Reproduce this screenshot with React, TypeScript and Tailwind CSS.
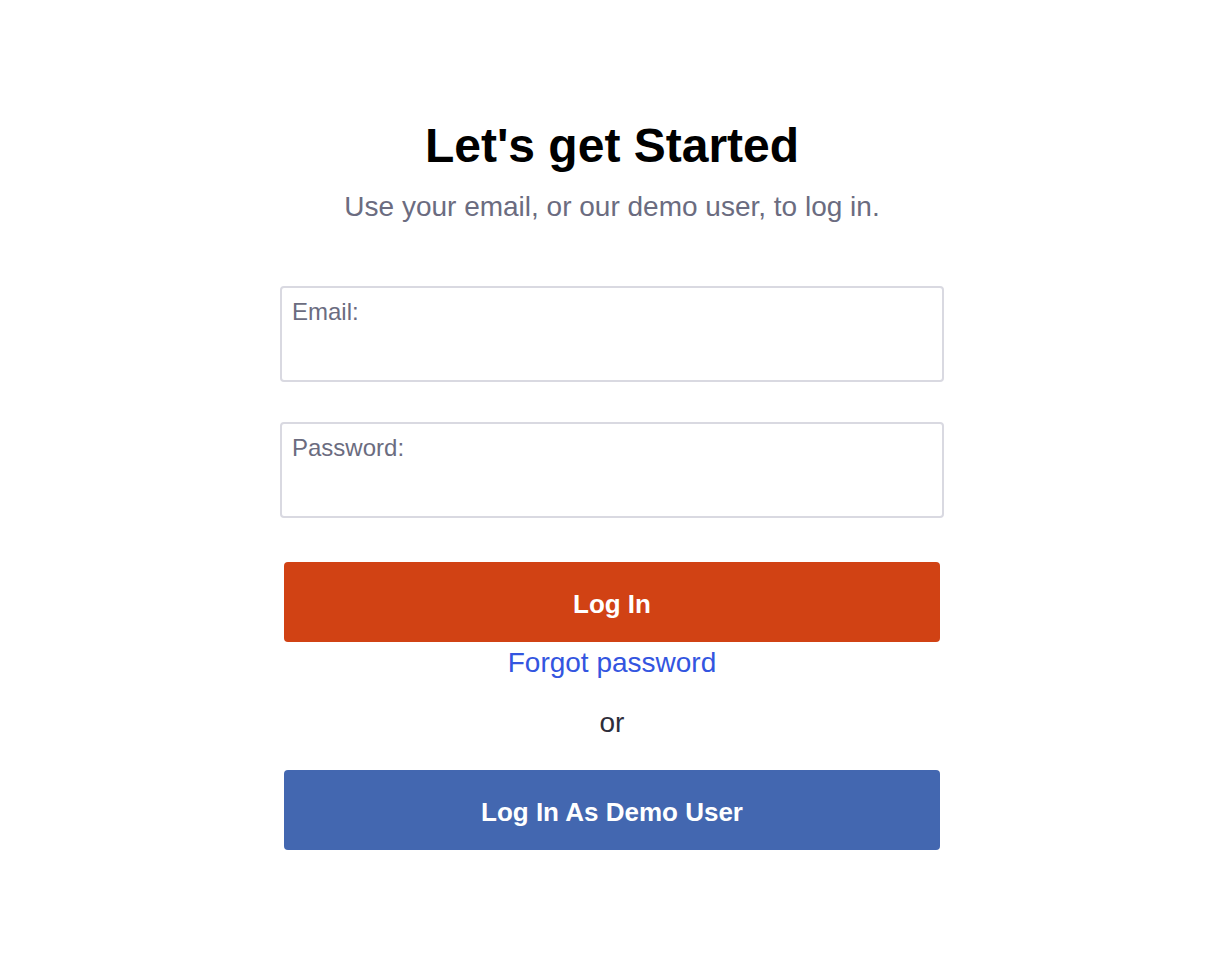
import { useState } from "react";

const font = { fontFamily: '"Liberation Sans", Arial, sans-serif' };

const Field = ({ label, type }: { label: string; type: string }) => {
  const [value, setValue] = useState("");
  return (
    <label className="flex flex-col h-[96px] border-2 border-[#d9d9e1] rounded-[4px] px-[10px] pt-[10px] bg-white">
      <span className="text-[24px] leading-[28px] text-[#6b6c80]">{label}</span>
      <input
        type={type}
        value={value}
        onChange={(e) => setValue(e.target.value)}
        className="mt-1 text-[22px] text-[#2d2d3a] outline-none bg-transparent"
      />
    </label>
  );
};

export default function App() {
  return (
    <div className="min-h-screen bg-white" style={font}>
      <div className="ml-[280px] w-[664px] pt-[118px] flex flex-col">
        {/* Header */}
        <h1 className="text-[48px] leading-[56px] font-bold text-black text-center">Let's get Started</h1>
        <p className="mt-[15px] text-[28px] leading-[36px] text-[#6b6c80] text-center">
          Use your email, or our demo user, to log in.
        </p>

        {/* Form */}
        <form className="mt-[61px] flex flex-col" onSubmit={(e) => e.preventDefault()}>
          <div className="flex flex-col gap-[40px]">
            <Field label="Email:" type="email" />
            <Field label="Password:" type="password" />
          </div>

          <button
            type="submit"
            className="mt-[44px] mx-1 h-[80px] pt-[4px] rounded-[4px] bg-[#d14214] text-white text-[26px] font-bold"
          >
            Log In
          </button>
          <a href="#" className="mt-[5px] self-center text-[28px] leading-[32px] text-[#3355e0]">
            Forgot password
          </a>
          <p className="mt-[28px] text-center text-[28px] leading-[32px] text-[#2d2d3a]">or</p>
          <button
            type="button"
            className="mt-[31px] mx-1 h-[80px] pt-[4px] rounded-[4px] bg-[#4367b0] text-white text-[26px] font-bold"
          >
            Log In As Demo User
          </button>
        </form>
      </div>
    </div>
  );
}
